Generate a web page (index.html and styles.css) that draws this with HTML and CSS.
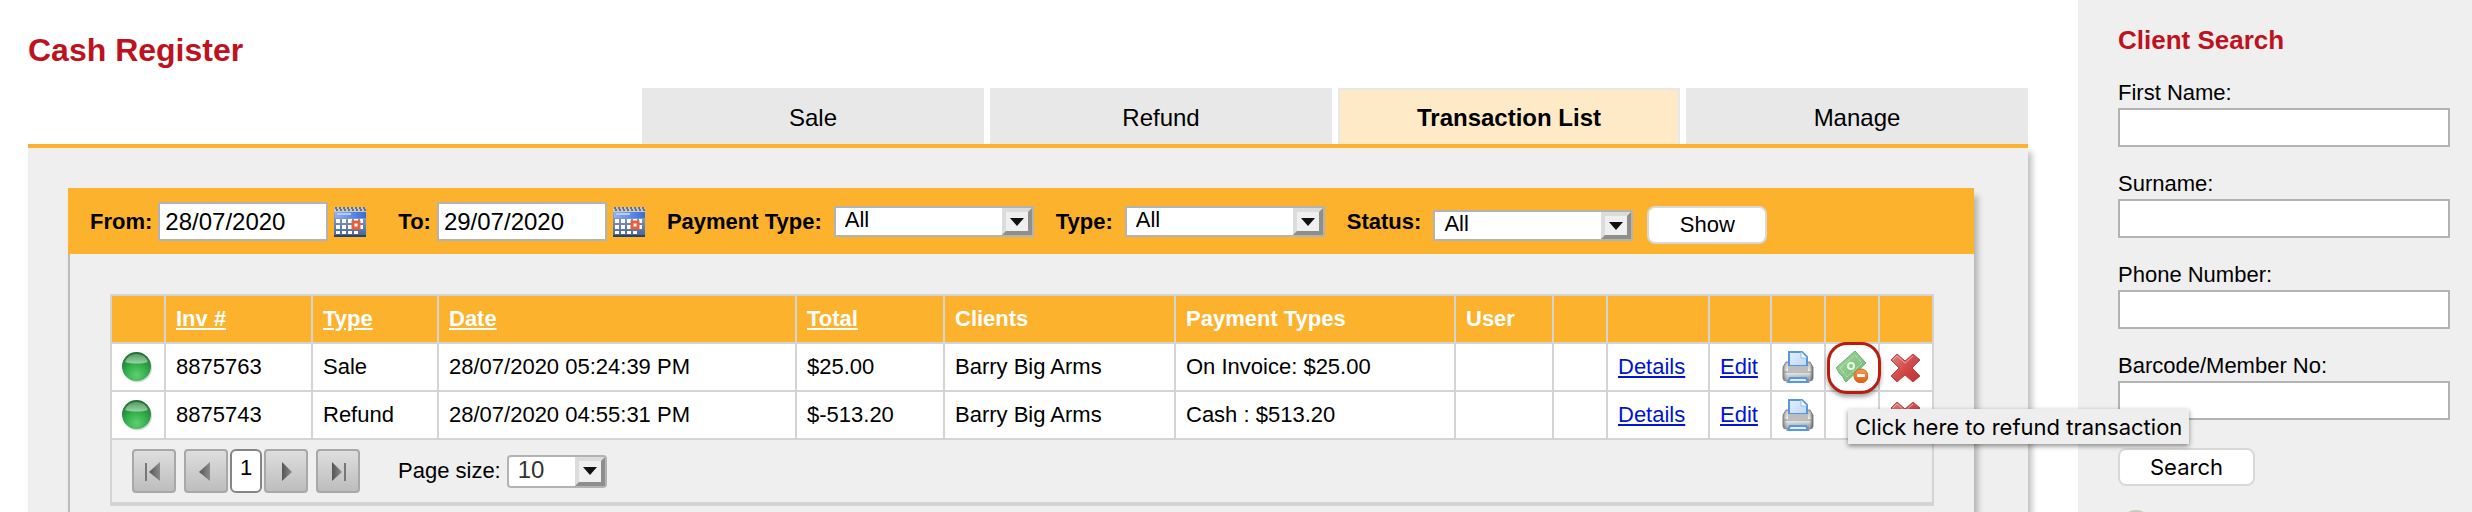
FILE: index.html
```html
<!DOCTYPE html>
<html lang="en">
<head>
    <meta charset="UTF-8">
    <meta name="viewport" content="width=device-width, initial-scale=1.0">
    <title>Cash Register</title>
    <link rel="stylesheet" href="styles.css">
</head>
<body>

    <!-- Icons -->
    <svg class="defs" aria-hidden="true">
        <defs>
            <linearGradient id="calTop" x1="0" y1="0" x2="1" y2="0">
                <stop offset="0" stop-color="#8fb0f5"/>
                <stop offset="1" stop-color="#3a6cd6"/>
            </linearGradient>
            <linearGradient id="calBody" x1="0" y1="0" x2="0" y2="1">
                <stop offset="0" stop-color="#9db8e4"/>
                <stop offset="1" stop-color="#466293"/>
            </linearGradient>
            <radialGradient id="ball" cx="0.5" cy="0.8" r="0.8">
                <stop offset="0" stop-color="#5fd070"/>
                <stop offset="0.5" stop-color="#2fac48"/>
                <stop offset="1" stop-color="#1d6a30"/>
            </radialGradient>
            <linearGradient id="shine" x1="0" y1="0" x2="0" y2="1">
                <stop offset="0" stop-color="#fff" stop-opacity="0.25"/>
                <stop offset="1" stop-color="#fff" stop-opacity="0.5"/>
            </linearGradient>
            <linearGradient id="paper" x1="0" y1="0" x2="1" y2="1">
                <stop offset="0" stop-color="#e4f0fd"/>
                <stop offset="1" stop-color="#b9d8f8"/>
            </linearGradient>
            <linearGradient id="metal" x1="0" y1="0" x2="0" y2="1">
                <stop offset="0" stop-color="#aaa"/>
                <stop offset="0.5" stop-color="#f2f2f2"/>
                <stop offset="1" stop-color="#777"/>
            </linearGradient>
            <linearGradient id="metalSide" x1="0" y1="0" x2="1" y2="0">
                <stop offset="0" stop-color="#555" stop-opacity="0.7"/>
                <stop offset="0.15" stop-color="#fff" stop-opacity="0.3"/>
                <stop offset="0.85" stop-color="#fff" stop-opacity="0.1"/>
                <stop offset="1" stop-color="#222" stop-opacity="0.8"/>
            </linearGradient>
            <linearGradient id="note" x1="0" y1="0" x2="1" y2="1">
                <stop offset="0" stop-color="#a5d9a0"/>
                <stop offset="1" stop-color="#6db56f"/>
            </linearGradient>
            <linearGradient id="minus" x1="0" y1="0" x2="0" y2="1">
                <stop offset="0" stop-color="#f7a04e"/>
                <stop offset="1" stop-color="#dd5a0c"/>
            </linearGradient>
            <linearGradient id="cross" x1="0" y1="0" x2="1" y2="1">
                <stop offset="0" stop-color="#e58585"/>
                <stop offset="0.5" stop-color="#d14a4a"/>
                <stop offset="1" stop-color="#c02d2d"/>
            </linearGradient>
            <linearGradient id="arrow" x1="0" y1="0" x2="1" y2="0">
                <stop offset="0" stop-color="#555"/>
                <stop offset="1" stop-color="#8c8c8c"/>
            </linearGradient>
        </defs>

        <symbol id="calendar" viewBox="0 0 32 30">
            <rect width="32" height="30" fill="url(#calBody)"/>
            <rect width="32" height="5" fill="#c3c8d0"/>
            <path d="M1 1h30M2 3h30" stroke="#6a6f78" stroke-width="2" stroke-dasharray="2 2"/>
            <rect x="1" y="5" width="31" height="6" fill="url(#calTop)"/>
            <path d="M3 7h14" stroke="#b9ccf8" stroke-width="2"/>
            <path d="M2 12h4v4H2zM8 12h4v4H8zM14 12h4v4h-4zM20 12h4v4h-4zM26 12h3v4h-3zM2 18h4v4H2zM8 18h4v4H8zM14 18h4v4h-4zM26 18h3v4h-3zM2 24h4v3H2zM8 24h4v3H8zM14 24h4v3h-4zM20 24h4v3h-4z" fill="#fff"/>
            <rect x="19" y="15" width="6" height="6" fill="#fff" stroke="#e8603a" stroke-width="3"/>
            <path d="M0 29h32" stroke="#2c4265" stroke-width="2"/>
        </symbol>

        <symbol id="status" viewBox="0 0 32 32">
            <circle cx="15.500" cy="17" r="14.500" fill="#000" opacity="0.15"/>
            <circle cx="14.500" cy="15.500" r="14.500" fill="url(#ball)"/>
            <path d="M3 11C5 5 10 3 14.500 3S24 5 26 11c-6 2-17 2-23 0z" fill="url(#shine)"/>
        </symbol>

        <symbol id="printer" viewBox="0 0 32 32">
            <path d="M4 11h24l3 5v11q0 3-3 3H4q-3 0-3-3V16z" fill="url(#metal)"/>
            <path d="M4 11h24l3 5v11q0 3-3 3H4q-3 0-3-3V16z" fill="url(#metalSide)" stroke="#888"/>
            <path d="M7 1h13l5 5v9H7z" fill="url(#paper)" stroke="#5a97da" stroke-width="2"/>
            <path d="M19 1v6h6" fill="#fff" stroke="#8fbcec"/>
            <path d="M6 15h20v5H6z" fill="#bdbdbd"/>
            <path d="M2 21h28" stroke="#8a8a8a"/>
            <path d="M8 27h16l2 4H6z" fill="#e2effd" stroke="#5a97da" stroke-width="2"/>
        </symbol>

        <symbol id="refund" viewBox="0 0 32 32">
            <path d="M0 17L19 0l11 12L10 31C7 28 8 26 5 24s-2-4-5-7z" fill="url(#note)" stroke="#67b26a"/>
            <path d="M4 17L19 4l7 8-15 14z" fill="none" stroke="#b5e0b3" stroke-dasharray="4 1"/>
            <circle cx="15" cy="15" r="3" fill="#86c786" stroke="#eaf7e9" stroke-width="2"/>
            <circle cx="25" cy="25" r="7" fill="url(#minus)" stroke="#c4662a"/>
            <rect x="21" y="23" width="8" height="3" rx="1" fill="#fff"/>
        </symbol>

        <symbol id="delete" viewBox="0 0 32 32">
            <path d="M1 9l6-6 8 7 8-7 7 6-8 8 8 8-7 6-8-7-8 7-6-6 8-8z" fill="url(#cross)" stroke="#b24545"/>
            <path d="M3 9l4-4 8 7 8-7" fill="none" stroke="#eda0a0"/>
        </symbol>
    </svg>

    <main class="main">
        <h1>Cash Register</h1>

        <nav class="tabs">
            <a href="#sale">Sale</a>
            <a href="#refund-tab">Refund</a>
            <a href="#transactions" class="active">Transaction List</a>
            <a href="#manage">Manage</a>
        </nav>

        <div class="panel">
            <div class="box">
                <form class="filter">
                    <div class="filter-group date-group">
                        <label for="from">From:</label>
                        <input type="text" id="from" value="28/07/2020">
                        <button type="button" class="icon-button" aria-label="Pick from date"><svg class="calendar"><use href="#calendar"/></svg></button>
                    </div>
                    <div class="filter-group date-group">
                        <label for="to">To:</label>
                        <input type="text" id="to" value="29/07/2020">
                        <button type="button" class="icon-button" aria-label="Pick to date"><svg class="calendar"><use href="#calendar"/></svg></button>
                    </div>
                    <div class="filter-group">
                        <label for="paymentType">Payment Type:</label>
                        <span class="select"><select id="paymentType"><option>All</option></select></span>
                    </div>
                    <div class="filter-group">
                        <label for="type">Type:</label>
                        <span class="select"><select id="type"><option>All</option></select></span>
                    </div>
                    <div class="filter-group status-group">
                        <label for="status-filter">Status:</label>
                        <span class="select"><select id="status-filter"><option>All</option></select></span>
                        <button type="button" class="button">Show</button>
                    </div>
                </form>

                <div class="grid">
                    <table>
                        <colgroup>
                            <col class="col-icon">
                            <col class="col-inv">
                            <col class="col-type">
                            <col class="col-date">
                            <col class="col-total">
                            <col class="col-clients">
                            <col>
                            <col class="col-user">
                            <col class="col-icon">
                            <col class="col-details">
                            <col class="col-edit">
                            <col class="col-icon">
                            <col class="col-icon">
                            <col class="col-icon">
                        </colgroup>
                        <thead>
                            <tr>
                                <th></th>
                                <th><a href="#inv">Inv #</a></th>
                                <th><a href="#type">Type</a></th>
                                <th><a href="#date">Date</a></th>
                                <th><a href="#total">Total</a></th>
                                <th>Clients</th>
                                <th>Payment Types</th>
                                <th>User</th>
                                <th></th>
                                <th></th>
                                <th></th>
                                <th></th>
                                <th></th>
                                <th></th>
                            </tr>
                        </thead>
                        <tbody>
                            <tr>
                                <td><svg class="icon"><use href="#status"/></svg></td>
                                <td>8875763</td>
                                <td>Sale</td>
                                <td>28/07/2020 05:24:39 PM</td>
                                <td>$25.00</td>
                                <td>Barry Big Arms</td>
                                <td>On Invoice: $25.00</td>
                                <td></td>
                                <td></td>
                                <td><a href="#details">Details</a></td>
                                <td><a href="#edit">Edit</a></td>
                                <td><button type="button" class="icon-button" aria-label="Print"><svg class="icon"><use href="#printer"/></svg></button></td>
                                <td>
                                    <div class="refund">
                                        <button type="button" class="icon-button" aria-label="Refund"><svg class="icon"><use href="#refund"/></svg></button>
                                        <span class="tooltip" role="tooltip">Click here to refund transaction</span>
                                    </div>
                                </td>
                                <td><button type="button" class="icon-button" aria-label="Delete"><svg class="icon"><use href="#delete"/></svg></button></td>
                            </tr>
                            <tr>
                                <td><svg class="icon"><use href="#status"/></svg></td>
                                <td>8875743</td>
                                <td>Refund</td>
                                <td>28/07/2020 04:55:31 PM</td>
                                <td>$-513.20</td>
                                <td>Barry Big Arms</td>
                                <td>Cash : $513.20</td>
                                <td></td>
                                <td></td>
                                <td><a href="#details">Details</a></td>
                                <td><a href="#edit">Edit</a></td>
                                <td><button type="button" class="icon-button" aria-label="Print"><svg class="icon"><use href="#printer"/></svg></button></td>
                                <td></td>
                                <td><button type="button" class="icon-button" aria-label="Delete"><svg class="icon"><use href="#delete"/></svg></button></td>
                            </tr>
                        </tbody>
                    </table>

                    <div class="pager">
                        <div class="pager-buttons">
                            <button type="button" class="page-arrow" aria-label="First page"><svg viewBox="0 0 44 44"><path d="M14 14v18" stroke="#777" stroke-width="2"/><path d="M28 13v19L17 23z" fill="url(#arrow)"/></svg></button>
                            <button type="button" class="page-arrow" aria-label="Previous page"><svg viewBox="0 0 44 44"><path d="M26 13v19L15 23z" fill="url(#arrow)"/></svg></button>
                            <button type="button" class="page-number">1</button>
                            <button type="button" class="page-arrow" aria-label="Next page"><svg viewBox="0 0 44 44"><path d="M18 13v19l10-9z" fill="url(#arrow)"/></svg></button>
                            <button type="button" class="page-arrow" aria-label="Last page"><svg viewBox="0 0 44 44"><path d="M16 13v19l10-9z" fill="url(#arrow)"/><path d="M29 14v18" stroke="#777" stroke-width="2"/></svg></button>
                        </div>
                        <label for="pageSize">Page size:</label>
                        <span class="select page-size"><select id="pageSize"><option>10</option></select></span>
                    </div>
                </div>
            </div>
        </div>
    </main>

    <aside class="sidebar">
        <h2>Client Search</h2>
        <form>
            <div class="form-group">
                <label for="firstName">First Name:</label>
                <input type="text" id="firstName">
            </div>
            <div class="form-group">
                <label for="surname">Surname:</label>
                <input type="text" id="surname">
            </div>
            <div class="form-group">
                <label for="phone">Phone Number:</label>
                <input type="text" id="phone">
            </div>
            <div class="form-group">
                <label for="barcode">Barcode/Member No:</label>
                <input type="text" id="barcode">
            </div>
            <button type="button" class="button search-button">Search</button>
        </form>
        <svg class="avatar" viewBox="0 0 32 32"><circle cx="16" cy="16" r="16" fill="#cdc6bb"/></svg>
    </aside>

</body>
</html>
```

FILE: styles.css
```css
*, *::before, *::after {
    box-sizing: border-box;
}

body {
    margin: 0;
    display: flex;
    height: 100vh;
    background-color: #fff;
    color: #000;
    font-family: "Liberation Sans", Arial, sans-serif;
    font-size: 22px;
    line-height: 26px;
}

input, select, button {
    font-family: inherit;
    font-size: 22px;
    color: #000;
    margin: 0;
}

button {
    cursor: pointer;
}

.defs {
    position: absolute;
    width: 0;
    height: 0;
}

.main {
    flex: 1;
    min-width: 0;
    display: flex;
    flex-direction: column;
    padding: 32px 50px 0 28px;
}

h1 {
    margin: 0 0 20px;
    color: #be1220;
    font-size: 32px;
    line-height: 36px;
}

/* Tabs */
.tabs {
    display: flex;
    justify-content: flex-end;
    gap: 6px;
}

.tabs a {
    width: 342px;
    padding: 14px 0 12px;
    border: 2px solid #e8e8e8;
    border-bottom: none;
    background-color: #e8e8e8;
    color: #000;
    font-size: 24px;
    line-height: 28px;
    text-align: center;
    text-decoration: none;
}

.tabs .active {
    background-color: #feeac6;
    font-weight: bold;
}

.panel {
    flex: 1;
    display: flex;
    padding: 40px 54px 0 40px;
    border-top: 4px solid #fcb22d;
    background-color: #efefef;
    box-shadow: 4px 8px 6px rgba(0, 0, 0, 0.25);
}

.box {
    flex: 1;
    min-width: 0;
    background-color: #efefef;
    box-shadow: 4px 8px 6px rgba(0, 0, 0, 0.25), inset 2px 0 0 #bbb;
}

/* Filter bar */
.filter {
    display: flex;
    align-items: center;
    height: 66px;
    padding-left: 22px;
    background-color: #fcb22d;
}

.filter-group {
    display: flex;
    align-items: center;
    gap: 12px;
    margin-right: 22px;
}

.filter label {
    padding-top: 2px;
    font-weight: bold;
}

.date-group {
    gap: 6px;
}

.date-group:first-child {
    margin-right: 32px;
}

.date-group input {
    width: 170px;
    padding: 2px 5px 0;
    font-size: 24px;
}

.status-group .select,
.status-group .button {
    margin-top: 8px;
}

.status-group .button {
    margin-left: 2px;
}

input {
    height: 39px;
    border: 2px solid #b3b3b3;
    border-radius: 0;
    background-color: #fff;
}

.icon-button {
    display: block;
    padding: 0;
    border: none;
    background: none;
}

.calendar {
    display: block;
    width: 32px;
    height: 30px;
    margin-top: 2px;
}

.select {
    position: relative;
    display: block;
    width: 200px;
    height: 31px;
    border: 2px solid #b3b3b3;
    background-color: #fff;
}

.select select {
    display: block;
    width: 100%;
    height: 27px;
    padding: 0 32px 2px 9px;
    border: none;
    background: none;
    appearance: none;
    line-height: 24px;
}

/* bevelled drop-down arrow */
.select::before {
    content: "";
    position: absolute;
    top: 0;
    right: 0;
    width: 30px;
    height: 27px;
    border: 4px solid;
    border-color: #dcdcdc #8e8e8e #8e8e8e #dcdcdc;
    background-color: #efefef;
    pointer-events: none;
}

.select::after {
    content: "";
    position: absolute;
    top: 10px;
    right: 8px;
    border: 7px solid transparent;
    border-top: 8px solid #111;
    border-bottom: none;
    pointer-events: none;
}

.button {
    width: 120px;
    height: 38px;
    padding: 0;
    border: 2px solid #d8d8d8;
    border-radius: 8px;
    background-color: #fff;
}

/* Transactions */
.grid {
    margin: 40px 40px 0 42px;
}

table {
    width: 100%;
    table-layout: fixed;
    border-collapse: collapse;
}

.col-icon { width: 54px; }
.col-inv { width: 147px; }
.col-type { width: 126px; }
.col-date { width: 358px; }
.col-total { width: 148px; }
.col-clients { width: 231px; }
.col-user { width: 98px; }
.col-details { width: 102px; }
.col-edit { width: 62px; }

th, td {
    height: 48px;
    padding: 0 10px;
    border: 2px solid #d4d4d4;
    text-align: left;
    white-space: nowrap;
}

th {
    background-color: #fcb22d;
    color: #fff;
}

th a {
    color: #fff;
}

td {
    background-color: #fff;
}

td a {
    color: #0014d2;
}

.icon {
    display: block;
    width: 32px;
    height: 32px;
}

.refund {
    position: relative;
    width: 32px;
}

/* highlight ring around the refund button */
.refund::before {
    content: "";
    position: absolute;
    top: -9px;
    left: -9px;
    width: 54px;
    height: 52px;
    border: 3px solid #b81d12;
    border-radius: 20px;
    box-shadow: 0 3px 4px rgba(0, 0, 0, 0.35);
    pointer-events: none;
}

.tooltip {
    position: absolute;
    top: 58px;
    left: 12px;
    z-index: 1;
    padding: 5px 7px 4px;
    background-color: #eee;
    box-shadow: 0 2px 5px rgba(0, 0, 0, 0.45);
    font-family: Inter, sans-serif;
    white-space: nowrap;
}

/* Pager */
.pager {
    display: flex;
    align-items: center;
    height: 66px;
    padding: 0 20px;
    border: 2px solid #d4d4d4;
    border-top: none;
    border-bottom-width: 4px;
}

.pager-buttons {
    display: flex;
    gap: 2px;
    margin-right: 38px;
}

.page-arrow {
    width: 44px;
    height: 44px;
    padding: 0;
    border: 2px solid #a8a8a8;
    border-radius: 4px;
    background: linear-gradient(#dedede, #bdbdbd);
}

.page-arrow:first-child {
    margin-right: 6px;
}

.page-arrow:last-child {
    margin-left: 6px;
}

.page-arrow svg {
    display: block;
    width: 44px;
    height: 44px;
    margin: -2px;
}

.page-number {
    width: 32px;
    height: 44px;
    padding: 0 0 6px;
    border: 2px solid #858585;
    border-radius: 6px;
    background-color: #fff;
}

.page-size {
    width: 100px;
    height: 33px;
    margin-left: 6px;
    border-radius: 4px;
}

.page-size select {
    height: 29px;
    color: #333;
    font-size: 24px;
}

.page-size::before {
    height: 29px;
}

/* Client search */
.sidebar {
    width: 394px;
    padding: 24px 22px 0 40px;
    background-color: #efefef;
    overflow: hidden;
}

h2 {
    margin: 0 0 24px;
    color: #be1220;
    font-size: 26px;
    line-height: 32px;
}

.form-group {
    margin-bottom: 24px;
}

.form-group label {
    display: block;
    margin-bottom: 2px;
}

.form-group input {
    display: block;
    width: 100%;
    padding: 0 6px;
}

.search-button {
    display: block;
    width: 137px;
    margin-top: 28px;
    font-family: Inter, sans-serif;
}

.avatar {
    display: block;
    width: 32px;
    height: 32px;
    margin: 24px 0 0 2px;
}
```
